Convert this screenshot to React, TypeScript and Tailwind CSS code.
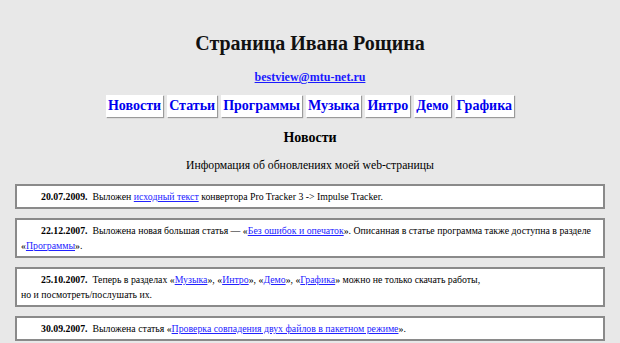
const nav = ["Новости", "Статьи", "Программы", "Музыка", "Интро", "Демо", "Графика"];

function L({ children }: { children: React.ReactNode }) {
  return (
    <a href="#" className="text-[#2222ff] underline">
      {children}
    </a>
  );
}

function NewsBox({ date, children }: { date: string; children: React.ReactNode }) {
  return (
    <div className="mx-[15px] mb-[9px] border-2 border-[#8a8a8a] bg-white px-[4px] py-[3px]">
      <p className="indent-[20px] text-[9.8px] leading-[15px] text-black">
        <b>{date}</b>&nbsp;&nbsp;{children}
      </p>
    </div>
  );
}

export default function App() {
  return (
    <div className="min-h-[343px] bg-[#e8e8e8] pt-[29px] font-['Liberation_Serif',serif] text-black">
      <h1 className="text-center text-[20px] font-bold leading-[28px] text-[#111]">
        Страница Ивана Рощина
      </h1>

      <div className="mt-[12px] text-center text-[12px] font-bold leading-[16px]">
        <a href="#" className="text-[#1a1aff] underline">
          bestview@mtu-net.ru
        </a>
      </div>

      <div className="mt-[10px] flex justify-center gap-[4px]">
        {nav.map((n) => (
          <div
            key={n}
            className="bg-white px-[2px] text-[14px] font-bold leading-[22px] text-[#0000ee] shadow-[1px_1px_1px_#9a9a9a]"
          >
            {n}
          </div>
        ))}
      </div>

      <h2 className="mt-[10px] text-center text-[14px] font-bold leading-[22px]">Новости</h2>

      <p className="mt-[9px] text-center text-[11.7px] leading-[16px]">
        Информация об обновлениях моей web-страницы
      </p>

      <div className="mt-[10px]">
        <NewsBox date="20.07.2009.">
          Выложен <L>исходный текст</L> конвертора Pro Tracker 3 -&gt; Impulse Tracker.
        </NewsBox>
        <NewsBox date="22.12.2007.">
          Выложена новая большая статья — «<L>Без ошибок и опечаток</L>». Описанная в статье
          программа также доступна в разделе «<L>Программы</L>».
        </NewsBox>
        <NewsBox date="25.10.2007.">
          Теперь в разделах «<L>Музыка</L>», «<L>Интро</L>», «<L>Демо</L>», «<L>Графика</L>»
          можно не только скачать работы,
          <br />
          но и посмотреть/послушать их.
        </NewsBox>
        <NewsBox date="30.09.2007.">
          Выложена статья «<L>Проверка совпадения двух файлов в пакетном режиме</L>».
        </NewsBox>
      </div>
    </div>
  );
}
